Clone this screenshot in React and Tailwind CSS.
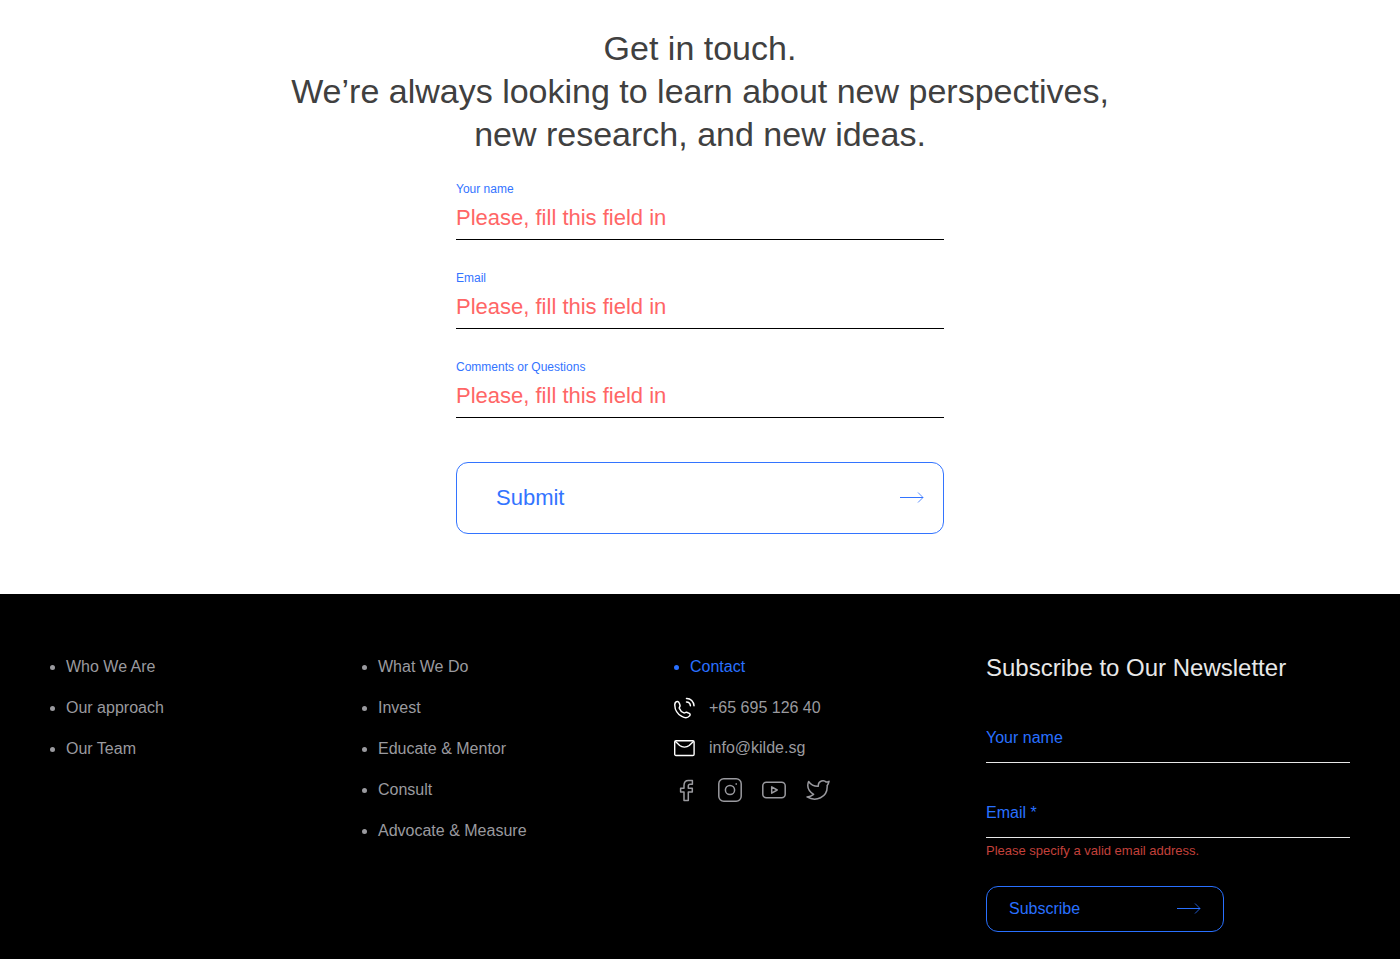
import React from 'react';

const aboutLinks = ['Who We Are', 'Our approach', 'Our Team'];
const serviceLinks = ['What We Do', 'Invest', 'Educate & Mentor', 'Consult', 'Advocate & Measure'];

const contactFields = [
  { id: 'name', label: 'Your name', type: 'text' },
  { id: 'email', label: 'Email', type: 'email' },
  { id: 'comments', label: 'Comments or Questions', type: 'text' },
];

const Arrow = () => (
  <svg width="24" height="12" viewBox="0 0 24 12" fill="none" stroke="currentColor" aria-hidden="true">
    <path d="M0 6.5h23" />
    <path d="M18 1.5l5 5-5 5" strokeWidth="0.8" />
  </svg>
);

const PhoneIcon = () => (
  <svg width="21" height="22" viewBox="0 0 21 22" fill="none" stroke="#fff" strokeWidth="1.5" strokeLinecap="round" strokeLinejoin="round" aria-hidden="true">
    <path d="M.8 7.500c.1-1.800 1.300-3 2.800-3 1 0 1.500.8 1.900 2.100l.5 1.900c.3 1.100-.9 1.700-.7 2.700.8 2.100 2.500 3.900 4.600 4.700 1 .3 1.700-.9 2.700-.6l2.700 1.100c1.100.5 1 1.600.2 2.500-1.700 2.100-5 2.100-7.700.5C3.800 17.200.6 12.500.8 7.500z" />
    <path d="M12.500 1.400c4-.2 7.400 3.200 7.500 7.400" />
    <path d="M12.500 4.900c2.300 0 3.700 1.600 3.900 3.900" />
  </svg>
);

const MailIcon = () => (
  <svg width="21" height="22" viewBox="0 0 21 22" fill="none" stroke="#fff" strokeWidth="1.4" strokeLinejoin="round" aria-hidden="true">
    <rect x="0.700" y="3.700" width="19.400" height="14.800" rx="1.300" />
    <path d="M1.200 4.200l4.500 4.300c2.500 2.200 7 2.200 9.500 0l4.500-4.300" />
  </svg>
);

const socials = [
  {
    name: 'Facebook',
    icon: <path d="M10 22.500v-8.500H6.600v-3.800H10V7.500c0-3.300 1.600-5 4.400-5h4v3.800h-2.200c-1.300 0-1.900.7-1.900 1.900v2h4V14h-4v8.500z" />,
  },
  {
    name: 'Instagram',
    icon: (
      <>
        <rect x="0.800" y="0.800" width="22.400" height="22.400" rx="5" />
        <circle cx="12" cy="12" r="4.600" />
        <path d="M17.500 6h1.500" />
      </>
    ),
  },
  {
    name: 'YouTube',
    icon: (
      <>
        <rect x="0.800" y="4.200" width="22.400" height="15.600" rx="3.500" />
        <path d="M9.700 8.800v6.400l5.500-3.200z" />
      </>
    ),
  },
  {
    name: 'Twitter',
    icon: (
      <path d="M23 3.300c-.8.500-1.700.8-2.700.8-2.500-2.500-7.700-1.500-8 2.900v1.300C8.500 8.500 5 6.900 2.600 3.500 1 7.500 1.400 12.200 7.600 16.400 5.700 17.900 3.400 18.800 1 18.900c8.900 5.200 20.300.5 20.200-10.400 0-.3 0-.5-.1-.8.900-1.200 1.600-2.700 1.900-4.400z" />
    ),
  },
];

const FooterList = ({ links }) => (
  <ul className="list-disc pl-4 flex flex-col gap-4">
    {links.map((link) => (
      <li key={link}>
        <a className="hover:text-white" href="#">{link}</a>
      </li>
    ))}
  </ul>
);

const ContactForm = () => (
  <section className="px-6 pt-[27px] pb-[60px]">
    <h1 className="text-center text-[34px] leading-[43px] text-[#404040]">
      Get in touch.
      <br />
      We’re always looking to learn about new perspectives,
      <br />
      new research, and new ideas.
    </h1>
    <form className="mx-auto mt-[25px] w-full max-w-[488px]" noValidate onSubmit={(e) => e.preventDefault()}>
      <div className="flex flex-col gap-[30px]">
        {contactFields.map((field) => (
          <div key={field.id} className="flex flex-col border-b border-black">
            <label className="text-xs leading-4 text-[#3374ff]" htmlFor={field.id}>{field.label}</label>
            <input
              id={field.id}
              type={field.type}
              placeholder="Please, fill this field in"
              className="h-[42px] w-full bg-transparent text-[22px] outline-none placeholder:text-[#ff6666]"
            />
          </div>
        ))}
      </div>
      <button type="submit" className="mt-11 flex h-[72px] w-full items-center justify-between rounded-xl border border-[#3374ff] pb-0.5 pl-[39px] pr-[19px] text-[22px] text-[#3374ff]">
        Submit
        <Arrow />
      </button>
    </form>
  </section>
);

const Newsletter = () => (
  <form noValidate onSubmit={(e) => e.preventDefault()}>
    <h2 className="text-2xl leading-7 text-[#e8e8e8]">Subscribe to Our Newsletter</h2>
    <input
      aria-label="Your name"
      type="text"
      placeholder="Your name"
      className="mt-[31px] h-[50px] w-full border-b border-[#e8e8e8] bg-transparent outline-none placeholder:text-[#2970ff]"
    />
    <input
      aria-label="Email"
      type="email"
      placeholder="Email *"
      className="mt-[25px] h-[50px] w-full border-b border-[#e8e8e8] bg-transparent outline-none placeholder:text-[#2970ff]"
    />
    <p className="mt-1 text-[13px] leading-[18px] text-[#c3413b]">Please specify a valid email address.</p>
    <button type="submit" className="mt-[26px] flex h-[46px] w-[238px] items-center justify-between rounded-xl border border-[#2970ff] px-[22px] pb-0.5 text-[#2970ff]">
      Subscribe
      <Arrow />
    </button>
  </form>
);

const Footer = () => (
  <footer className="grow bg-black px-[50px] pt-[60px] pb-6 text-base leading-[25px] text-[#9a9a9f]">
    <div className="grid grid-cols-1 gap-y-10 md:grid-cols-[24fr_24fr_24fr_28fr]">
      <FooterList links={aboutLinks} />
      <FooterList links={serviceLinks} />
      <div>
        <ul className="list-disc pl-4 text-[#2970ff]">
          <li><a href="#">Contact</a></li>
        </ul>
        <a className="mt-4 flex items-center gap-[14px]" href="tel:+6569512640">
          <PhoneIcon />
          +65 695 126 40
        </a>
        <a className="mt-[15px] flex items-center gap-[14px]" href="mailto:info@kilde.sg">
          <MailIcon />
          info@kilde.sg
        </a>
        <div className="mt-[18px] flex gap-5">
          {socials.map((social) => (
            <a key={social.name} href="#" aria-label={social.name}>
              <svg width="24" height="24" viewBox="0 0 24 24" fill="none" stroke="currentColor" strokeWidth="1.500" strokeLinejoin="round">
                {social.icon}
              </svg>
            </a>
          ))}
        </div>
      </div>
      <Newsletter />
    </div>
  </footer>
);

export default function App() {
  return (
    <div className="flex min-h-screen flex-col bg-white font-['Liberation_Sans',Arial,sans-serif]">
      <ContactForm />
      <Footer />
    </div>
  );
}
